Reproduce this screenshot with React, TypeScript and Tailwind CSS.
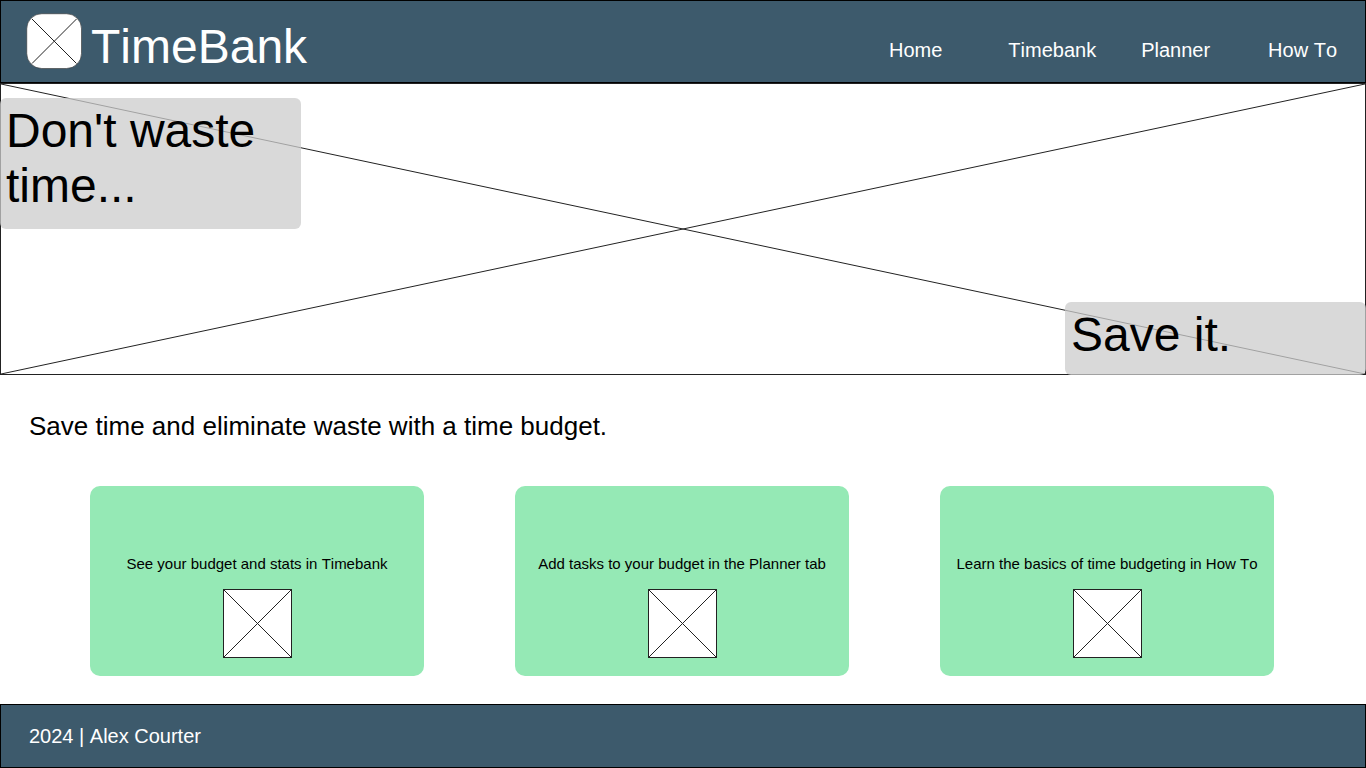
function Placeholder({ className }: { className: string }) {
  return (
    <svg className={className} aria-hidden="true">
      <rect width="100%" height="100%" fill="#fff" />
      <line x1="0" y1="0" x2="100%" y2="100%" stroke="#222" strokeWidth="1" />
      <line x1="0" y1="100%" x2="100%" y2="0" stroke="#222" strokeWidth="1" />
    </svg>
  );
}

function Logo() {
  return (
    <svg className="size-14 shrink-0" viewBox="0 0 56 56" aria-hidden="true">
      <rect x="0.75" y="0.75" width="54.75" height="54.75" rx="15" fill="#fff" stroke="#333" strokeWidth="0.6" />
      <path d="M6 6 50.5 50.5M6 50.5 50.5 6" stroke="#222" strokeWidth="1" />
    </svg>
  );
}

const cards = [
  'See your budget and stats in Timebank',
  'Add tasks to your budget in the Planner tab',
  'Learn the basics of time budgeting in How To',
];

export default function App() {
  return (
    <div className="flex min-h-screen flex-col bg-white font-['Liberation_Sans',Arial,sans-serif] text-black [font-kerning:none]">
      <header className="flex items-start justify-between border border-black bg-[#3d5a6c] pr-7 pb-[13px] pl-[25px] text-white">
        <div className="flex items-center gap-[9px] pt-3">
          <Logo />
          <span className="pt-3 text-5xl leading-[44px]">TimeBank</span>
        </div>
        <nav className="flex pt-[37px] text-xl leading-6">
          <a href="#home" className="mr-[66px]">Home</a>
          <a href="#timebank" className="mr-[45px]">Timebank</a>
          <a href="#planner" className="mr-[58px]">Planner</a>
          <a href="#how-to">How To</a>
        </nav>
      </header>

      <main className="flex grow flex-col">
        <section className="relative flex h-[292px] flex-col">
          <Placeholder className="absolute inset-0 size-full border border-[#222]" />
          <div className="relative flex grow flex-col items-start justify-between pt-[15px]">
            <h1 className="h-[131px] w-[301px] rounded-md bg-[#cccccc]/75 py-[5px] pl-1.5 text-5xl leading-[55px]">
              Don't waste time...
            </h1>
            <p className="h-[73px] w-[301px] self-end rounded-md bg-[#cccccc]/75 py-[5px] pl-1.5 text-5xl leading-[55px]">
              Save it.
            </p>
          </div>
        </section>

        <h2 className="px-[29px] pt-9 text-[26px] leading-[30px]">
          Save time and eliminate waste with a time budget.
        </h2>

        <section className="grid grid-cols-3 gap-[91px] pt-[45px] pr-[92px] pb-7 pl-[90px]">
          {cards.map((text) => (
            <article
              key={text}
              className="flex flex-col items-center rounded-[10px] bg-[#95e9b5] pt-[69px] pb-[18px] text-center text-[15px] leading-[18px]"
            >
              <p>{text}</p>
              <Placeholder className="mt-4 size-[69px] border border-[#222]" />
            </article>
          ))}
        </section>
      </main>

      <footer className="border border-black bg-[#3d5a6c] px-7 py-[19px] text-xl leading-6 text-white">
        2024 | Alex Courter
      </footer>
    </div>
  );
}
